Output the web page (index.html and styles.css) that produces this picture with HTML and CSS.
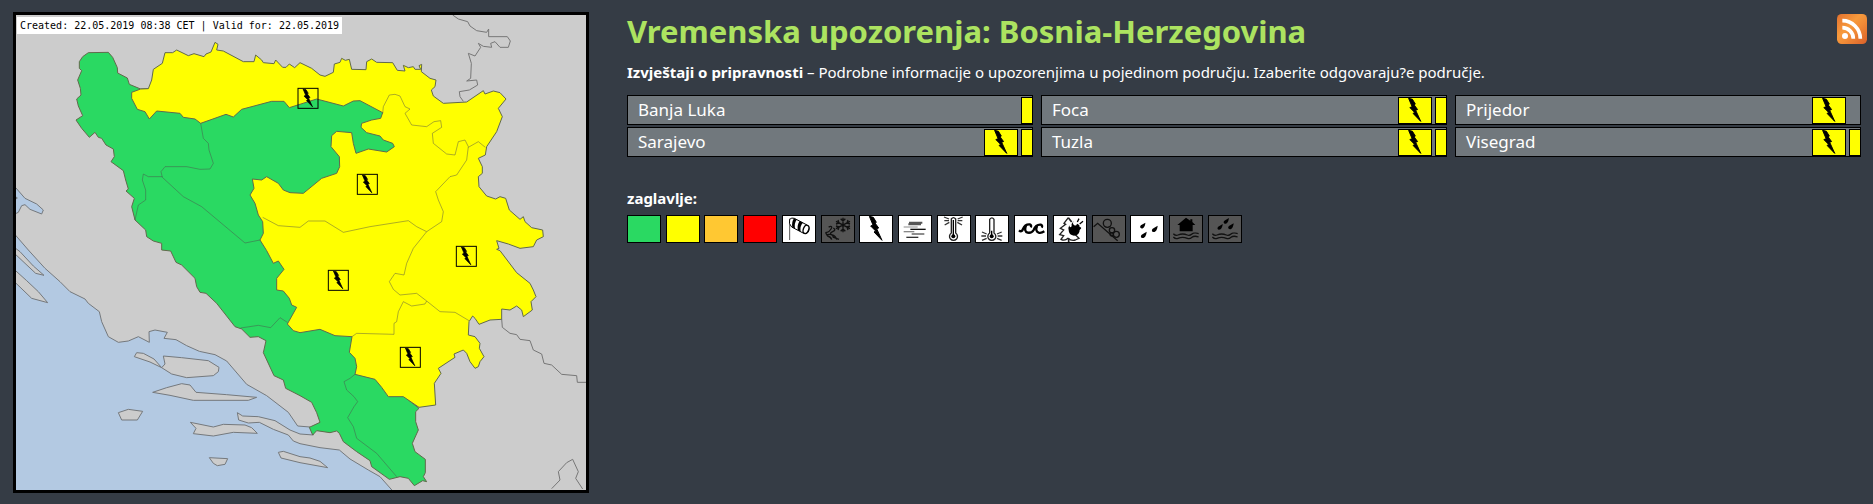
FILE: index.html
```html
<!DOCTYPE html>
<html lang="bs">
<head>
<meta charset="utf-8">
<title>Vremenska upozorenja: Bosnia-Herzegovina</title>
<link rel="stylesheet" href="styles.css">
</head>
<body>
<svg class="defs" aria-hidden="true">
  <defs>
    <symbol id="bolt" viewBox="0 0 96 78">
      <path d="M28 1 40 4 49 19 45 21 56 36 50 38 66 73 42 48 47 45 32 30 39 27Z" stroke="#000" stroke-width="3"/>
    </symbol>
    <symbol id="drop" viewBox="0 0 20 22"><path d="M19 1C18 11 14 20 7 20 1 20 0 14 4 10Z"/></symbol>
    <symbol id="waves" viewBox="0 0 80 26">
      <path d="M2 4Q9 11 16 8T30 5 44 8 58 5 78 4M2 14Q9 21 16 18T30 15 44 18 58 15 78 14" fill="none" stroke="currentColor" stroke-width="4"/>
    </symbol>
  </defs>
</svg>
<main class="page">
  <figure class="map">
    <figcaption class="map-caption">Created: 22.05.2019 08:38 CET | Valid for: 22.05.2019</figcaption>
    <svg class="map-image" viewBox="48 45 1710 1425" role="img" aria-label="Bosnia-Herzegovina">
      <rect class="sea" x="48" y="45" width="1710" height="1425"/>
      <path class="land" d="M40 698 85 750 135 805 180 845 210 875 255 897 265 910 298 935 305 965 325 1010 355 1027 385 1023 415 1010 448 1027 447 995 465 990 502 997 492 1015 528 1019 560 1037 598 1054 645 1064 680 1083 740 1153 800 1187 865 1237 893 1278 930 1281 940 1305 900 1302 870 1290 825 1262 775 1250 728 1248 712 1238 716 1260 745 1269 778 1267 820 1288 865 1305 880 1323 900 1331 960 1343 1018 1350 1050 1377 1105 1410 1140 1430 1180 1475H1770V35H40Z"/>
      <path class="water" d="M40 555 75 595 110 612 130 630 125 642 90 628 75 614 65 617 55 637 40 644ZM44 588 52 594 44 600Z"/>
      <path class="land" d="M40 740 60 755 100 798 132 826 107 820 40 757ZM40 806 80 842 115 875 143 908 95 895 40 842ZM403 1070 410 1058 430 1060 462 1077 485 1103 450 1086ZM490 1068 495 1092 485 1103 515 1122 560 1133 640 1127 655 1115 657 1102 625 1082 545 1073ZM458 1177 500 1163 545 1151 570 1155 588 1177 680 1184 770 1192 745 1201 580 1201 510 1186ZM355 1238 385 1228 428 1234 412 1260 365 1260ZM571 1267 640 1281 670 1273 735 1275 755 1283 772 1300 700 1297 640 1308 580 1301 588 1285ZM628 1373 683 1376 675 1393 652 1397 640 1390ZM835 1357 850 1354 900 1370 930 1374 960 1384 983 1403 900 1388 843 1374Z"/>
      <path class="border" d="M1358 45 1375 57 1403 65 1410 78 1430 92 1460 97 1466 87V110H1522L1531 123 1525 142H1500L1485 125 1472 130 1475 142 1450 139 1435 130 1442 142 1425 168 1405 160 1414 190 1412 235 1400 243 1430 240 1433 255 1408 270 1378 275 1380 290 1390 304M1505 957 1507 982 1530 1000 1550 1004 1560 1018 1590 1022 1600 1050 1625 1062 1632 1090 1655 1095 1685 1123 1730 1127 1732 1147H1758M1655 1466 1680 1440 1675 1415 1700 1388 1718 1378 1735 1415 1727 1435 1748 1467"/>
      <path class="region calm" d="M248 170 265 158 325 157 338 172 352 203 353 219 382 234 388 253 422 267 445 266 1000 250 1250 350 1250 500 1400 700 1200 1180 1257 1225 1247 1235V1265L1255 1290 1237 1330 1245 1355 1276 1378V1418L1270 1430 1280 1445 1268 1442 1243 1457 1225 1435 1200 1430 1168 1438 1115 1400 1110 1382 1070 1355 1030 1325 1018 1300 1010 1293 990 1298 950 1292 938 1305 928 1282 960 1267 950 1238 935 1207 900 1187 857 1165 850 1140 822 1127 790 1058 798 1022 775 1010 750 1012 725 987 705 980 650 910 618 880 600 877 590 860 585 835 545 795 528 787 512 753 485 750V730L460 723 440 710 437 690 405 660 395 620 403 595 378 573 385 567 377 540 370 512 333 485 343 470 340 447 318 435 305 415 295 412 285 397 268 412 245 385 228 360 248 347 235 318 230 297 243 285 241 265 233 240 245 212 238 205V185Z"/>
      <path class="region warn" d="M422 267 445 266 455 240 460 208 487 190 495 158 518 158 530 150 565 167 582 161 612 170 618 162 633 156 645 127 654 133 650 150 670 153 730 185 762 185 767 165 785 180 790 188 822 191 827 180 848 202 858 202 868 192 884 203 900 188 935 205 960 225 975 229 1000 217 1003 192 1020 187 1025 175 1036 181 1048 178 1055 208 1098 209 1100 185 1115 177 1130 187 1178 188 1192 211 1215 213 1210 196 1225 203 1240 200 1245 208 1262 208 1257 197 1265 193 1264 215 1290 235 1308 240 1305 260 1294 270 1300 288 1330 310 1400 306 1450 272 1455 282 1480 273 1500 278 1518 297 1495 325 1507 350 1490 395 1460 440 1456 465 1435 475 1447 500V520L1435 530 1437 560 1460 588 1487 597 1500 590 1517 595 1528 630 1560 658 1570 650 1575 665 1595 683 1628 690 1630 710 1610 720 1600 740 1560 745 1525 732 1490 722 1497 745 1490 748 1500 752 1550 818 1590 850 1600 870 1608 890 1593 905 1597 930 1570 950 1565 930 1550 918 1530 930 1505 927V958L1470 960 1437 973 1425 955 1418 948 1407 965 1405 1005 1425 1010 1440 1030 1438 1045 1452 1070 1440 1085 1435 1100 1425 1105 1410 1085 1400 1060 1390 1050 1362 1062 1365 1072 1315 1105 1323 1120 1303 1150 1307 1215 1257 1222 1210 1190 1165 1190 1145 1162 1125 1138 1065 1123 1070 1100 1065 1075 1048 1057 1056 1010 1005 1007 960 988 900 998 880 992 862 972 890 922 875 915 868 895 850 873 830 870V835L852 808 835 783 820 790 800 752 780 720 790 700 788 665 775 645 765 610 750 585 762 565 757 537 785 540 800 530 835 550 850 570 870 578 910 580 965 535 1010 520 1019 500 1018 470 993 440 995 407 1010 394 1055 398 1060 430 1068 460 1105 447 1160 456 1183 440 1178 430 1150 420 1140 408 1100 398 1083 382 1085 370 1115 360 1142 355 1148 338 1080 302 1060 303 1030 318 950 297 868 323 852 304H815L725 328 700 351 678 343 602 370 585 357 550 352 540 340 470 333 448 357 435 335 412 328 395 295V277Z"/>
      <path class="divide" d="M602 370 610 415 625 430 627 450 640 490 630 507 600 508 560 500H495L483 515 487 532 550 590 605 620 735 729 780 720M487 530 445 530 430 522 427 540 437 570V600L415 615 405 660M722 984 775 976 812 983 840 953 862 967M1065 1123 1050 1135 1032 1145 1040 1170 1062 1190 1073 1205 1062 1220 1043 1253 1060 1280 1070 1315 1130 1360 1190 1430"/>
      <path class="divide" d="M788 652 835 677 900 682 925 663H975L1030 697 1110 680 1225 662 1250 680 1280 695 1325 665 1330 635 1315 600 1307 575 1350 530 1370 525 1400 480 1405 440 1395 420 1375 425 1365 465 1340 462 1300 430 1297 400 1325 382 1322 362 1302 365 1280 380 1235 375 1215 340 1230 327 1215 320 1200 288 1185 283 1168 285 1150 320 1148 340M1405 442 1435 425 1456 442M1280 695 1240 745 1220 790 1212 825 1185 820 1168 845 1180 868 1200 885 1250 880 1280 903 1275 912 1235 918 1210 905 1195 935 1190 965 1182 970V1003L1070 1000 1056 1010M1280 903 1320 935 1365 937 1407 962"/>
      <g class="marker"><rect x="894" y="265" width="60" height="60"/><use href="#bolt" x="876" y="266" width="96" height="58"/></g>
      <g class="marker"><rect x="1072" y="523" width="60" height="60"/><use href="#bolt" x="1054" y="524" width="96" height="58"/></g>
      <g class="marker"><rect x="1369" y="739" width="60" height="60"/><use href="#bolt" x="1351" y="740" width="96" height="58"/></g>
      <g class="marker"><rect x="985" y="811" width="60" height="60"/><use href="#bolt" x="967" y="812" width="96" height="58"/></g>
      <g class="marker"><rect x="1201" y="1042" width="60" height="60"/><use href="#bolt" x="1183" y="1043" width="96" height="58"/></g>
    </svg>
  </figure>

  <section class="content">
    <header class="head">
      <h1>Vremenska upozorenja: Bosnia-Herzegovina</h1>
      <a class="rss" href="#rss" aria-label="RSS">
        <svg viewBox="0 0 90 90">
          <defs><linearGradient id="rss" x1="0" y1="0" x2="1" y2="1"><stop offset="0" stop-color="#e2702e"/><stop offset=".4" stop-color="#f79a3c"/><stop offset=".6" stop-color="#f08a36"/><stop offset="1" stop-color="#d9602a"/></linearGradient></defs>
          <rect width="90" height="90" rx="14" fill="url(#rss)"/>
          <circle cx="24" cy="66" r="9" fill="#fff"/>
          <path d="M16 41A33 33 0 0 1 49 74M16 20A54 54 0 0 1 70 74" fill="none" stroke="#fff" stroke-width="11"/>
        </svg>
      </a>
    </header>
    <p class="intro"><strong>Izvještaji o pripravnosti</strong> – Podrobne informacije o upozorenjima u pojedinom području. Izaberite odgovaraju?e područje.</p>
    <ul class="areas">
      <li><a href="#banja-luka"><span class="name">Banja Luka</span><span class="level"></span></a></li>
      <li><a href="#foca"><span class="name">Foca</span><svg class="alert"><use href="#bolt"/></svg><span class="level"></span></a></li>
      <li><a href="#prijedor"><span class="name">Prijedor</span><svg class="alert"><use href="#bolt"/></svg><span class="level none"></span></a></li>
      <li><a href="#sarajevo"><span class="name">Sarajevo</span><svg class="alert"><use href="#bolt"/></svg><span class="level"></span></a></li>
      <li><a href="#tuzla"><span class="name">Tuzla</span><svg class="alert"><use href="#bolt"/></svg><span class="level"></span></a></li>
      <li><a href="#visegrad"><span class="name">Visegrad</span><svg class="alert"><use href="#bolt"/></svg><span class="level"></span></a></li>
    </ul>
    <h2>zaglavlje:</h2>
    <ul class="legend">
      <li class="green"></li>
      <li class="yellow"></li>
      <li class="orange"></li>
      <li class="red"></li>
      <li><svg viewBox="0 0 96 78"><path d="M20 72V8" stroke="#555" stroke-width="3"/><path d="M20 10Q26 4 34 7L72 27Q82 34 76 48 71 54 62 52L26 33Q16 24 20 10Z" fill="#fff" stroke="#000" stroke-width="3"/><path d="M33 7Q25 18 28 34L36 38Q33 22 41 11ZM50 15Q42 26 44 42L53 47Q50 30 60 20Z"/><ellipse cx="69" cy="40" rx="8" ry="13" transform="rotate(20 69 40)" fill="#fff" stroke="#000" stroke-width="4"/></svg></li>
      <li class="off"><svg viewBox="0 0 96 78"><g fill="none" stroke="#111" stroke-width="4"><path d="M63 5V49M42 16 84 38M42 38 84 16M56 8 63 15 70 8M56 46 63 39 70 46M42 24 51 21 48 12M84 24 75 21 78 12M42 30 51 33 48 42M84 30 75 33 78 42"/><path d="M20 33Q34 28 27 39T14 49 17 60Q27 63 29 71M34 36Q44 42 32 47T30 57Q41 59 44 71M15 56Q32 52 34 64L51 70"/></g></svg></li>
      <li><svg viewBox="0 0 96 78"><use href="#bolt" width="96" height="78"/></svg></li>
      <li><svg viewBox="0 0 96 78"><g stroke-width="4" stroke="#111"><path d="M30 20H70M28 25H66" stroke="#555" stroke-width="6"/><path d="M14 33H56" stroke="#aaa"/><path d="M34 40H80"/><path d="M14 47H46" stroke="#888"/><path d="M38 54H76" stroke="#555"/><path d="M22 64H58" stroke="#333"/></g></svg></li>
      <li><svg viewBox="0 0 96 78"><path d="M40 51V9Q46 1 53 9V51A12 12 0 1 1 40 51Z" fill="#fff" stroke="#222" stroke-width="4"/><circle cx="46" cy="61" r="6"/><path d="M46 12V60" stroke="#000" stroke-width="4"/><path d="M18 3 33 9M19 14H33M20 27 34 19M74 3 59 9M73 14H59M72 27 58 19" stroke="#333" stroke-width="4"/></svg></li>
      <li><svg viewBox="0 0 96 78"><path d="M41 51V10Q48 1 54 10V51A12 12 0 1 1 41 51Z" fill="#fff" stroke="#222" stroke-width="4"/><circle cx="47" cy="61" r="6"/><path d="M47 44V60" stroke="#000" stroke-width="4"/><path d="M18 48 32 54M16 60H30M18 73 32 67M77 48 63 54M79 60H65M77 73 63 67" stroke="#333" stroke-width="4"/></svg></li>
      <li><svg viewBox="0 0 96 78"><g fill="none" stroke="#000" stroke-width="7"><path d="M12 43Q20 50 24 39 30 24 44 25 51 28 47 34M33 29Q26 46 38 50 50 52 56 42 62 25 77 26 84 29 80 35M66 30Q60 46 71 50 79 52 88 46"/></g></svg></li>
      <li><svg viewBox="0 0 96 78"><path d="M43 5 30 22 35 25 19 37 29 42 17 56 29 59 21 70Q32 76 42 67Q53 76 64 72L75 67 64 56" fill="#fff" stroke="#222" stroke-width="4"/><path d="M43 5 53 18M44 67V78" stroke="#222" stroke-width="5"/><path d="M59 15Q54 24 61 28 67 31 69 23 80 28 76 33 87 34 77 42 77 58 60 59 44 57 44 42 41 38 46 28 47 38 53 31 51 23 59 15ZM70 16 75 8M76 22 87 16"/><path d="M70 18 75 8M77 24 87 16" stroke="#000" stroke-width="4"/></svg></li>
      <li class="off"><svg viewBox="0 0 96 78"><g fill="none" stroke="#111" stroke-width="4"><path d="M2 32 14 22 74 74"/><circle cx="43" cy="22" r="12"/><circle cx="57" cy="43" r="8"/><circle cx="70" cy="55" r="9"/><circle cx="56" cy="55" r="5"/></g></svg></li>
      <li><svg viewBox="0 0 96 78"><use href="#drop" x="25" y="19" width="20" height="20"/><use href="#drop" x="61" y="28" width="20" height="22"/><use href="#drop" x="28" y="45" width="20" height="24"/></svg></li>
      <li class="off"><svg viewBox="0 0 96 78"><path d="M48 5 22 27H29V46H68V27H76L67 18V10H61V14Z"/><use href="#waves" x="8" y="49" width="80" height="26"/></svg></li>
      <li class="off"><svg viewBox="0 0 96 78"><use href="#drop" x="42" y="5" width="19" height="20"/><use href="#drop" x="24" y="22" width="18" height="22"/><use href="#drop" x="56" y="20" width="19" height="22"/><use href="#waves" x="8" y="49" width="80" height="26"/></svg></li>
    </ul>
  </section>
</main>
</body>
</html>
```

FILE: styles.css
```css
* { box-sizing: border-box; }

body {
  margin: 0;
  background: #353c45;
  color: #fff;
  font-family: "Noto Sans", sans-serif;
  font-size: 15px;
  line-height: 20px;
}

ul {
  margin: 0;
  padding: 0;
  list-style: none;
}

.defs {
  position: absolute;
  width: 0;
  height: 0;
}

.page {
  display: grid;
  grid-template-columns: minmax(0, 576px) minmax(0, 1fr);
  gap: 38px;
  align-items: start;
  padding: 12px 6px 11px 13px;
}

/* Map */
.map {
  position: relative;
  margin: 0;
  border: 3px solid #000;
}

.map-image {
  display: block;
  width: 100%;
  height: auto;
}

.map-caption {
  position: absolute;
  top: 2px;
  left: 1px;
  padding: 0 3px;
  background: #fff;
  color: #000;
  font: 10px/17px "DejaVu Sans Mono", monospace;
  white-space: nowrap;
}

.sea { fill: #b3c9e2; }
.land { fill: #ccc; stroke: #75797d; stroke-width: 3; }
.water { fill: #b3c9e2; stroke: #75797d; stroke-width: 3; }
.border { fill: none; stroke: #777; stroke-width: 3; }
.region { stroke: #626a4c; stroke-width: 3; }
.calm { fill: #2ad962; }
.warn { fill: #ff0; }
.divide { fill: none; stroke: #4c4c4c; stroke-opacity: .45; stroke-width: 3; }
.marker rect { fill: none; stroke: #000; stroke-width: 3; }

/* Heading */
.head {
  display: flex;
  justify-content: space-between;
  align-items: flex-start;
  padding-top: 2px;
}

h1 {
  margin: 0;
  color: #ace360;
  font-size: 31px;
  line-height: 34px;
}

.rss,
.rss svg {
  display: block;
  width: 30px;
  height: 30px;
}

.intro {
  margin: 14px 0 13px;
}

/* Areas */
.areas {
  display: grid;
  grid-template-columns: repeat(3, minmax(0, 1fr));
  gap: 2px 8px;
  margin-right: 6px;
}

.areas a {
  display: flex;
  align-items: center;
  gap: 3px;
  height: 30px;
  padding-left: 10px;
  border: 1px solid #000;
  background: #71787d;
  color: #fff;
  font-size: 17px;
  text-decoration: none;
}

.name { flex: 1; }

.alert {
  width: 34px;
  height: 27px;
  border: 1px solid #000;
  background: #ff0;
}

.level {
  width: 11px;
  height: 27px;
  border: 1px solid #000;
  border-right: 0;
  background: #ff0;
}

.level.none { visibility: hidden; }

/* Legend */
h2 {
  margin: 31px 0 7px;
  font-size: 15px;
  line-height: 20px;
}

.legend {
  display: flex;
  justify-content: space-between;
  max-width: 615px;
}

.legend li {
  width: 34px;
  height: 28px;
  border: 1px solid #000;
  background: #fff;
  color: #000;
}

.legend svg {
  display: block;
  width: 100%;
  height: 100%;
}

.legend .green { background: #2ad962; }
.legend .yellow { background: #ff0; }
.legend .orange { background: #ffc832; }
.legend .red { background: #f00; }
.legend .off { background: #555; color: #111; }
```
